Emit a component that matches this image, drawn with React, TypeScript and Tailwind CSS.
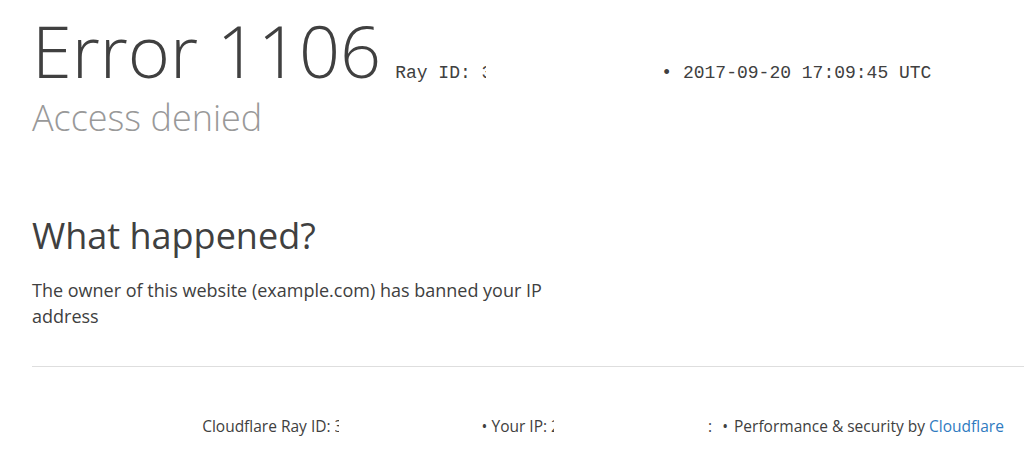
import React from "react";

export default function App() {
  return (
    <div className="w-full h-[452px] overflow-hidden bg-white text-[#404040] font-['Open_Sans',sans-serif]">
      <div className="w-[1174px] pl-8">
        <div className="flex items-baseline pt-[7px]">
          <h1 className="text-[72px] font-light leading-[86px]">Error 1106</h1>
          <span className="ml-[14px] font-['Liberation_Mono',monospace] text-[18px] text-[#404040] whitespace-pre">
            Ray ID: <span className="inline-block w-[4px] overflow-hidden align-bottom">3</span>
            <span className="inline-block w-[165px]"></span> • 2017-09-20 17:09:45 UTC
          </span>
        </div>
        <h2 className="mt-[3px] text-[36px] font-light leading-[44px] text-[#999999]">Access denied</h2>

        <section className="mt-[72px]">
          <h2 className="text-[36px] font-normal leading-[48px]">What happened?</h2>
          <p className="mt-[17px] w-[560px] text-[18px] leading-[26px]">
            The owner of this website (example.com) has banned your IP address
          </p>
        </section>

        <div className="mt-[37px] border-t border-[#dedede]" />

        <div className="mt-[49px] flex justify-center text-[15.5px] leading-[20px] whitespace-pre">
          <span>
            Cloudflare Ray ID: <span className="inline-block w-[4px] overflow-hidden align-bottom">3</span>
            <span className="inline-block w-[139px]"></span>
          </span>
          <span> • </span>
          <span>
            Your IP: <span className="inline-block w-[3px] overflow-hidden align-bottom">2</span>
            <span className="inline-block w-[154px]"></span>:
          </span>
          <span className="ml-[6px] mr-[2px]"> • </span>
          <span>
            Performance &amp; security by <a className="text-[#2f7bbf]">Cloudflare</a>
          </span>
        </div>
      </div>
    </div>
  );
}
